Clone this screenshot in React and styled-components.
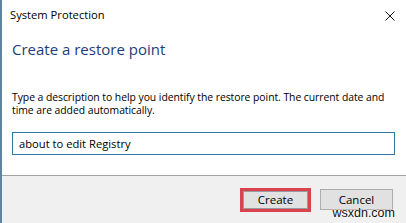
import React from "react";
import styled, { createGlobalStyle } from "styled-components";

const GlobalStyle = createGlobalStyle`
  html, body {
    margin: 0;
    padding: 0;
    background: #ffffff;
  }
  body {
    font-family: "Open Sans", "Noto Sans", sans-serif;
  }
`;

const Window = styled.div`
  position: relative;
  display: flex;
  flex-direction: column;
  width: 406px;
  height: 223px;
  box-sizing: border-box;
  border-left: 2px solid #5f84a2;
  background: #ffffff;
  overflow: hidden;
`;

const TitleBar = styled.div`
  display: flex;
  align-items: center;
  justify-content: space-between;
  height: 30px;
  padding: 0 11px 0 8px;
  flex-shrink: 0;
`;

const Title = styled.div`
  font-size: 11.2px;
  line-height: 16px;
  color: #000000;
`;

const CloseButton = styled.div`
  display: flex;
  width: 10px;
  height: 10px;
  margin-top: 1px;
`;

const Body = styled.div`
  flex: 1;
  display: flex;
  flex-direction: column;
  padding: 0 11px 0 10px;
`;

const Heading = styled.div`
  margin-top: 8px;
  font-size: 15px;
  line-height: 22px;
  color: #1e3c78;
`;

const Description = styled.p`
  margin: 31px 0 0;
  font-size: 10.4px;
  line-height: 13px;
  letter-spacing: -0.05px;
  white-space: nowrap;
  color: #000000;
`;

const TextInput = styled.div`
  display: flex;
  align-items: center;
  height: 23px;
  margin-top: 15px;
  padding: 0 6px;
  box-sizing: border-box;
  border: 1px solid #2f78a4;
  font-size: 11.2px;
  color: #000000;
`;

const Footer = styled.div`
  display: flex;
  align-items: center;
  justify-content: flex-end;
  gap: ${(p) => p.$gap}px;
  height: 47px;
  flex-shrink: 0;
  padding-right: 13px;
  border-top: 1px solid #a3a3a3;
  background: #f0f0f0;
`;

const Button = styled.div`
  display: flex;
  align-items: center;
  justify-content: center;
  box-sizing: border-box;
  width: ${(p) => (p.$highlight ? 71 : 73)}px;
  height: ${(p) => (p.$highlight ? 24 : 21)}px;
  border: ${(p) => (p.$highlight ? "3px solid #d8434f" : "1px solid #adadad")};
  box-shadow: ${(p) => (p.$highlight ? "inset 0 0 0 1px #9a9a9a" : "none")};
  background: #e1e1e1;
  font-size: 11.5px;
  color: #000000;
`;

const Watermark = styled.div`
  position: absolute;
  right: 11px;
  bottom: 3px;
  font-family: "Liberation Sans", Arial, sans-serif;
  font-size: 12.5px;
  line-height: 14px;
  color: #111111;
  text-shadow: 0 0 2px #ffffff, 0 0 2px #ffffff;
`;

function CloseIcon() {
  return (
    <svg width="10" height="10" viewBox="0 0 10 10">
      <path d="M0.5 0.5 L9.5 9.5 M9.5 0.5 L0.5 9.5" stroke="#111" strokeWidth="1" fill="none" />
    </svg>
  );
}

export default function App() {
  return (
    <>
      <GlobalStyle />
      <Window>
        <TitleBar>
          <Title>System Protection</Title>
          <CloseButton>
            <CloseIcon />
          </CloseButton>
        </TitleBar>
        <Body>
          <Heading>Create a restore point</Heading>
          <Description>
            Type a description to help you identify the restore point. The current date and
            <br />
            time are added automatically.
          </Description>
          <TextInput>about to edit Registry</TextInput>
        </Body>
        <Footer $gap={9}>
          <Button $highlight>Create</Button>
          <Button>Cancel</Button>
        </Footer>
        <Watermark>wsxdn.com</Watermark>
      </Window>
    </>
  );
}
